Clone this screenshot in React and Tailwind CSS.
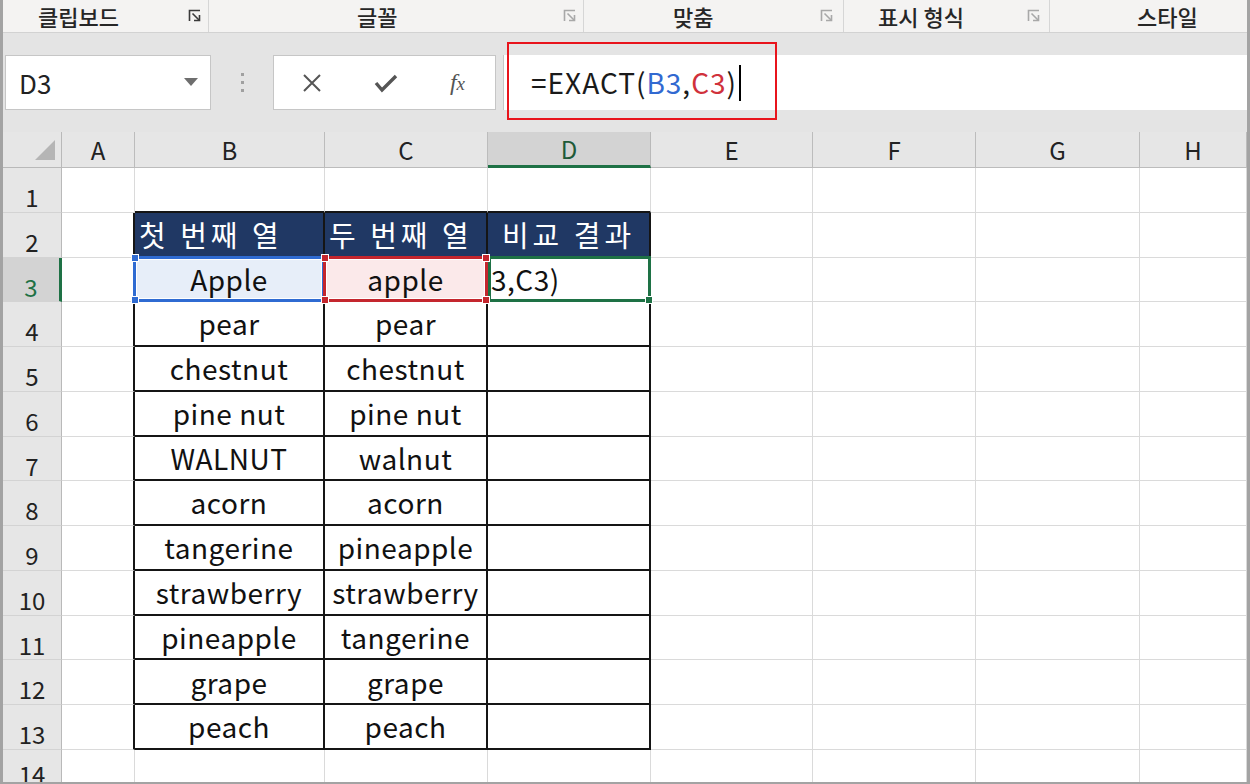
import React from 'react';

const COLS = [
  { key: 'A', w: 'w-[73px]' },
  { key: 'B', w: 'w-[190px]' },
  { key: 'C', w: 'w-[163px]' },
  { key: 'D', w: 'w-[163px]' },
  { key: 'E', w: 'w-[162px]' },
  { key: 'F', w: 'w-[163px]' },
  { key: 'G', w: 'w-[164px]' },
  { key: 'H', w: 'w-[107px]' },
];

const DATA = {
  2: ['첫 번째 열', '두 번째 열', '비교 결과'],
  3: ['Apple', 'apple', '3,C3)'],
  4: ['pear', 'pear', ''],
  5: ['chestnut', 'chestnut', ''],
  6: ['pine nut', 'pine nut', ''],
  7: ['WALNUT', 'walnut', ''],
  8: ['acorn', 'acorn', ''],
  9: ['tangerine', 'pineapple', ''],
  10: ['strawberry', 'strawberry', ''],
  11: ['pineapple', 'tangerine', ''],
  12: ['grape', 'grape', ''],
  13: ['peach', 'peach', ''],
};

const GROUPS = [
  { label: '클립보드', w: 'w-[206px]', pl: 'pl-[35px]', mr: 'mr-[6px]', dark: true },
  { label: '글꼴', w: 'w-[375px]', pl: 'pl-[148px]', mr: 'mr-[6px]' },
  { label: '맞춤', w: 'w-[260px]', pl: 'pl-[89px]', mr: 'mr-[9px]' },
  { label: '표시 형식', w: 'w-[206px]', pl: 'pl-[34px]', mr: 'mr-[8px]' },
  { label: '스타일', w: 'flex-1', pl: 'pl-[87px]', mr: '', last: true },
];

function Launcher({ dark }) {
  const c = dark ? '#3a3a3a' : '#a8a8a8';
  return (
    <svg width="14" height="14" viewBox="0 0 14 14" fill="none" stroke={c} strokeWidth="1.6">
      <path d="M1.5 12V1.5H12" />
      <path d="M4.5 4.5L11 11" />
      <path d="M11.5 6v5.5H6" />
    </svg>
  );
}

function Handle({ pos, color }) {
  return <div className={`absolute w-[8px] h-[8px] border border-white ${pos} ${color}`} />;
}

function Cell({ r, col, i }) {
  const inTable = r >= 2 && r <= 13 && i >= 1 && i <= 3;
  let cls = 'border-r border-b border-[#dadada]';
  if (r === 1 && i >= 1 && i <= 3) cls = 'border-r border-r-[#dadada] border-b-2 border-b-[#151515]';
  if (r >= 2 && r <= 13 && i === 0) cls = 'border-r-2 border-r-[#151515] border-b border-b-[#dadada]';
  if (inTable) cls = 'border-r-2 border-b-2 border-[#151515]';
  let bg = 'bg-white';
  let text = 'text-[#111] tracking-[0.5px] text-[28px]';
  let align = 'justify-center';
  if (r === 2 && inTable) {
    bg = 'bg-[#203864]';
    text = 'text-white tracking-[4px] text-[29px]';
    if (i !== 3) align = 'justify-start pl-[4px]';
  }
  if (r === 3 && i === 1) bg = 'bg-[#e7eef9]';
  if (r === 3 && i === 2) bg = 'bg-[#fbe9ea]';
  if (r === 3 && i === 3) align = 'justify-start pl-[3px]';
  const value = inTable ? DATA[r][i - 1] : '';
  return (
    <div className={`relative shrink-0 h-full flex items-center ${align} ${col.w} ${cls} ${bg} ${text} leading-[1.2]`}>
      <span className="whitespace-nowrap pt-[1px]">{value}</span>
      {r === 3 && i === 1 && (
        <div className="absolute -left-[2px] -top-[2px] -right-[2px] -bottom-[2px] z-10 border-[3px] border-[#2f6bd2] shadow-[inset_0_0_0_1px_white]">
          <Handle pos="-left-[5px] -top-[5px]" color="bg-[#2f6bd2]" />
          <Handle pos="-left-[5px] -bottom-[5px]" color="bg-[#2f6bd2]" />
        </div>
      )}
      {r === 3 && i === 2 && (
        <div className="absolute -left-[2px] -top-[2px] -right-[2px] -bottom-[2px] z-10 border-[3px] border-[#c4262e] shadow-[inset_0_0_0_1px_white]">
          <Handle pos="-left-[5px] -top-[5px]" color="bg-[#c4262e]" />
          <Handle pos="-left-[5px] -bottom-[5px]" color="bg-[#c4262e]" />
          <Handle pos="-right-[5px] -top-[5px]" color="bg-[#c4262e]" />
          <Handle pos="-right-[5px] -bottom-[5px]" color="bg-[#c4262e]" />
        </div>
      )}
      {r === 3 && i === 3 && (
        <div className="absolute left-0 -top-[2px] -right-[2px] -bottom-[2px] z-[5] border-[3px] border-[#1e7145]">
          <Handle pos="-right-[5px] -bottom-[5px]" color="bg-[#1e7145]" />
        </div>
      )}
    </div>
  );
}

function Row({ r, h }) {
  const active = r === 3;
  return (
    <div className={`flex ${h}`}>
      <div
        className={`w-[59px] shrink-0 h-full flex items-end justify-center text-[24px] leading-[1.2] border-b border-[#d3d3d3] ${
          active
            ? 'bg-[#d3d3d3] text-[#1e7145] border-r-[3px] border-r-[#1e7145]'
            : 'bg-[#e6e6e6] text-[#222] border-r border-r-[#b9b9b9]'
        }`}
      >
        <span>{r}</span>
      </div>
      {COLS.map((col, i) => (
        <Cell key={col.key} r={r} col={col} i={i} />
      ))}
    </div>
  );
}

export default function App() {
  const rows = Array.from({ length: 13 }, (_, k) => k + 1);
  return (
    <div className="w-[1250px] h-[784px] overflow-hidden bg-[#e6e6e6] border-l-[3px] border-r-[3px] border-b-2 border-[#a3a3a3] font-['Noto_Sans_CJK_KR','Noto_Sans',sans-serif] flex flex-col">
      {/* ribbon group labels */}
      <div className="h-[33px] shrink-0 flex bg-[#f4f3f2] border-b border-[#d2d2d2]">
        {GROUPS.map((g) => (
          <div key={g.label} className={`${g.w} shrink-0 flex items-center ${g.pl} ${g.last ? '' : 'border-r border-[#d6d6d6]'}`}>
            <span className="text-[22px] leading-[1.2] font-medium text-[#262626] whitespace-nowrap">{g.label}</span>
            {!g.last && (
              <span className={`ml-auto ${g.mr} flex`}>
                <Launcher dark={g.dark} />
              </span>
            )}
          </div>
        ))}
      </div>

      {/* formula bar */}
      <div className="h-[99px] shrink-0 flex items-start pt-[22px] bg-[#e4e4e4] relative">
        <div className="ml-[2px] w-[206px] h-[55px] bg-white border border-[#c6c6c6] flex items-center pl-[13px] pr-[12px]">
          <span className="text-[26px] leading-[1.2] text-[#222]">D3</span>
          <svg className="ml-auto" width="14" height="9" viewBox="0 0 14 9">
            <path d="M0 0h14L7 8z" fill="#6e6e6e" />
          </svg>
        </div>
        <div className="w-[62px] h-[55px] flex flex-col items-center justify-center gap-[5px]">
          <span className="w-[3px] h-[3px] bg-[#a0a0a0]" />
          <span className="w-[3px] h-[3px] bg-[#a0a0a0]" />
          <span className="w-[3px] h-[3px] bg-[#a0a0a0]" />
        </div>
        <div className="w-[223px] h-[55px] bg-white border border-[#c6c6c6] flex items-center">
          <div className="w-[76px] flex justify-center">
            <svg width="20" height="20" viewBox="0 0 20 20" stroke="#555" strokeWidth="2">
              <path d="M2 2l16 16M18 2L2 18" />
            </svg>
          </div>
          <div className="w-[72px] flex justify-center">
            <svg width="24" height="20" viewBox="0 0 24 20" fill="none" stroke="#555" strokeWidth="3.4">
              <path d="M2 10l6 7L22 3" />
            </svg>
          </div>
          <div className="flex-1 flex justify-center pr-[2px]">
            <span className="text-[24px] italic text-[#555] font-['Liberation_Serif',serif] leading-[1.2]">
              f<span className="text-[19px]">x</span>
            </span>
          </div>
        </div>
        <div className="ml-[7px] flex-1 h-[55px] bg-white border-l border-[#c6c6c6] flex items-center pl-[27px]">
          <span className="text-[28px] leading-[1.2] tracking-[1px] text-[#1a1a1a] whitespace-nowrap">
            =EXACT(<span className="text-[#3169d1]">B3</span>,<span className="text-[#d0313b]">C3</span>)
          </span>
          <span className="ml-[2px] w-[2px] h-[36px] bg-black" />
        </div>
        {/* red highlight annotation */}
        <div className="absolute left-[504px] top-[9px] w-[270px] h-[78px] border-2 border-[#e8141c] pointer-events-none" />
      </div>

      {/* column headers */}
      <div className="h-[36px] shrink-0 flex">
        <div className="w-[59px] shrink-0 h-full border-r border-b border-[#b9b9b9] relative">
          <svg className="absolute left-[32px] top-[8px]" width="20" height="20" viewBox="0 0 20 20">
            <path d="M20 0V20H0z" fill="#b5b5b5" />
          </svg>
        </div>
        {COLS.map((col) => (
          <div
            key={col.key}
            className={`${col.w} shrink-0 h-full flex items-center justify-center text-[24px] leading-[1.2] ${
              col.key === 'D'
                ? 'bg-[#d3d3d3] text-[#1e5a38] border-r border-r-[#b9b9b9] border-b-[3px] border-b-[#1e7145]'
                : 'text-[#222] border-r border-b border-[#bcbcbc]'
            }`}
          >
            <span className="pt-[2px]">{col.key}</span>
          </div>
        ))}
      </div>

      {/* grid */}
      <div className="flex-1 bg-white flex flex-col">
        {rows.map((r) => (
          <Row key={r} r={r} h="h-[44.77px]" />
        ))}
        <div className="flex flex-1">
          <div className="w-[59px] shrink-0 bg-[#e6e6e6] border-r border-[#b9b9b9] flex justify-center pt-[10px] text-[24px] leading-[1.2] text-[#222]">
            14
          </div>
          {COLS.map((col) => (
            <div key={col.key} className={`${col.w} shrink-0 border-r border-[#dadada]`} />
          ))}
        </div>
      </div>
    </div>
  );
}
